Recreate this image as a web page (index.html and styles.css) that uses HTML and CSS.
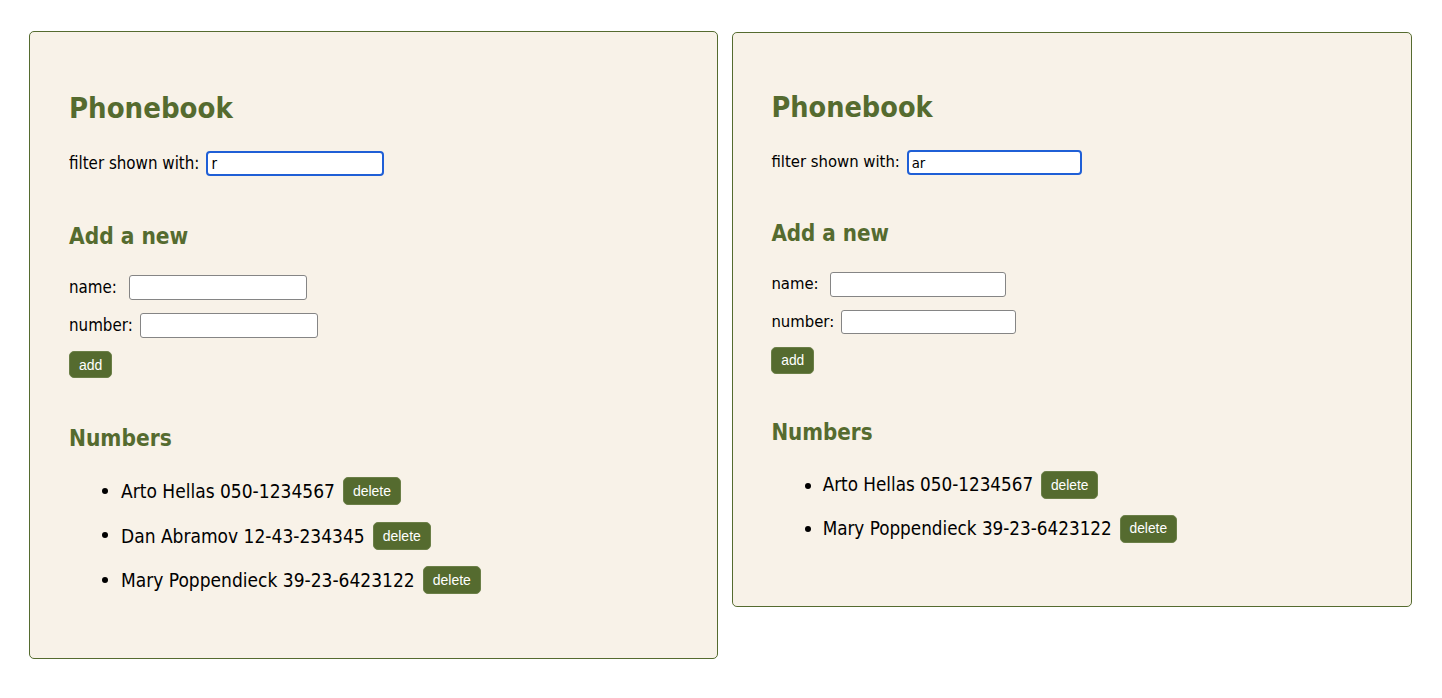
FILE: index.html
```html
<!DOCTYPE html>
<html>
<head>
<meta charset="utf-8">
<title>Phonebook</title>
<link rel="stylesheet" href="styles.css">
</head>
<body>
<div class="shots">
  <div class="panel">
    <h1 class="title">Phonebook</h1>
    <div class="row row-filter">
      <span class="label">filter shown with:</span>
      <input class="field field-focus" type="text" value="r">
    </div>
    <h2 class="subtitle sub-add">Add a new</h2>
    <form class="form">
      <div class="row row-name">
        <span class="label">name:</span>
        <input class="field" type="text">
      </div>
      <div class="row row-number">
        <span class="label">number:</span>
        <input class="field" type="text">
      </div>
      <div class="row row-btn">
        <button class="btn btn-add" type="button">add</button>
      </div>
    </form>
    <h2 class="subtitle sub-numbers">Numbers</h2>
    <ul class="people">
      <li class="person"><span class="person-text">Arto Hellas 050-1234567</span><button class="btn btn-del" type="button">delete</button></li>
      <li class="person"><span class="person-text">Dan Abramov 12-43-234345</span><button class="btn btn-del" type="button">delete</button></li>
      <li class="person"><span class="person-text">Mary Poppendieck 39-23-6423122</span><button class="btn btn-del" type="button">delete</button></li>
    </ul>
  </div>

  <div class="panel panel-second">
    <h1 class="title">Phonebook</h1>
    <div class="row row-filter">
      <span class="label">filter shown with:</span>
      <input class="field field-focus" type="text" value="ar">
    </div>
    <h2 class="subtitle sub-add">Add a new</h2>
    <form class="form">
      <div class="row row-name">
        <span class="label">name:</span>
        <input class="field" type="text">
      </div>
      <div class="row row-number">
        <span class="label">number:</span>
        <input class="field" type="text">
      </div>
      <div class="row row-btn">
        <button class="btn btn-add" type="button">add</button>
      </div>
    </form>
    <h2 class="subtitle sub-numbers">Numbers</h2>
    <ul class="people">
      <li class="person"><span class="person-text">Arto Hellas 050-1234567</span><button class="btn btn-del" type="button">delete</button></li>
      <li class="person"><span class="person-text">Mary Poppendieck 39-23-6423122</span><button class="btn btn-del" type="button">delete</button></li>
    </ul>
  </div>
</div>
</body>
</html>
```

FILE: styles.css
```css
* {
  box-sizing: border-box;
}

html, body {
  margin: 0;
  padding: 0;
  background: #ffffff;
}

body {
  font-family: "DejaVu Sans Condensed", "DejaVu Sans", sans-serif;
  color: #000000;
}

.shots {
  display: flex;
  align-items: flex-start;
  gap: 14px;
  padding: 31px 0 0 29px;
}

.panel {
  width: 689px;
  background: #f8f2e8;
  border: 1px solid #556b2f;
  border-radius: 5px;
  padding: 59px 39px 64px 39px;
}

.panel-second {
  zoom: 0.985;
  width: 690px;
  margin-top: 1px;
}

.title {
  margin: 0;
  height: 34px;
  line-height: 34px;
  font-size: 29px;
  font-weight: bold;
  color: #556b2f;
}

.subtitle {
  margin: 46px 0 0 0;
  height: 28px;
  line-height: 28px;
  font-size: 22.5px;
  font-weight: bold;
  color: #556b2f;
}

.form {
  margin: 0;
}

.row {
  display: flex;
  align-items: center;
  height: 25px;
  gap: 7px;
}

.label {
  font-size: 16.8px;
  line-height: 25px;
  white-space: nowrap;
}

.row-filter {
  margin-top: 26px;
}

.row-name {
  margin-top: 25px;
  gap: 12px;
}

.row-number {
  margin-top: 13px;
}

.row-btn {
  margin-top: 13px;
  height: 27px;
}

.field {
  width: 178px;
  height: 25px;
  margin: 0;
  padding: 0 4px;
  background: #ffffff;
  border: 1px solid #858585;
  border-radius: 3px;
  font-family: "DejaVu Sans Condensed", "DejaVu Sans", sans-serif;
  font-size: 15px;
  color: #000000;
  outline: none;
}

.field-focus {
  border: 2px solid #1f5fd6;
  border-radius: 4px;
  padding: 0 3px;
}

.panel-second .field-focus {
  border-width: 2.1px;
}

.btn {
  margin: 0;
  padding: 0 9px;
  background: #556b2f;
  color: #ffffff;
  border: 1px solid #6b7f47;
  border-radius: 5px;
  font-family: "Liberation Sans", Arial, sans-serif;
  font-size: 14px;
  cursor: pointer;
}

.btn-add {
  height: 27px;
}

.btn-del {
  height: 28px;
  margin-left: 8px;
}

.people {
  margin: 25px 0 0 0;
  padding: 0 0 0 52px;
  list-style: disc;
}

.person {
  height: 28px;
  line-height: 24px;
  font-size: 19px;
  margin-bottom: 16.5px;
}

.person:last-child {
  margin-bottom: 0;
}

.person-text {
  vertical-align: middle;
}

.person .btn-del {
  vertical-align: middle;
}
```
